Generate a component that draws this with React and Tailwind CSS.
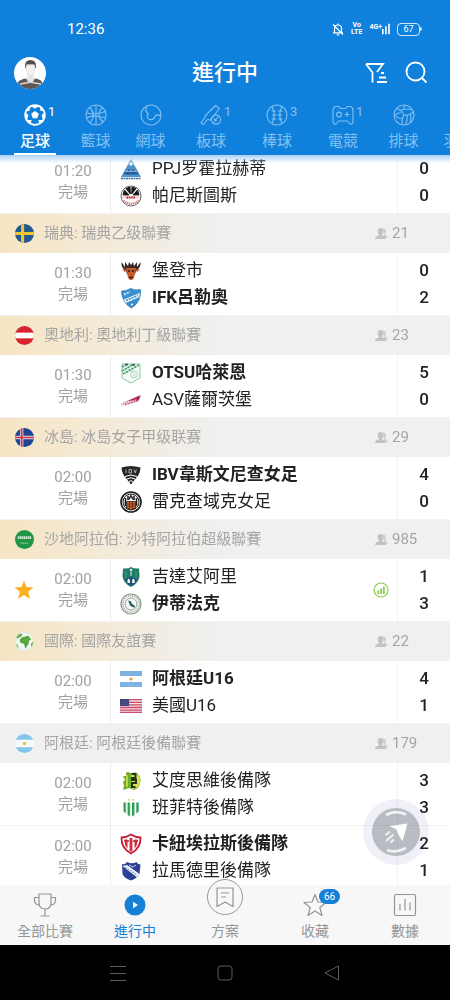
import React from "react";

const crests = {
  ppj: (
    <>
      <path d="M11 1 L21 19 H1 Z" fill="#4f93c8" />
      <path d="M11 1 L14 7 H8 Z" fill="#8dbde0" />
      <circle cx="11" cy="6" r="1.5" fill="#fff" />
      <path d="M6.5 11.5 h9 l3 5 h-15 z" fill="#1d5f9c" />
      <path d="M5.5 14 q1.5 -3 3 0 M9.5 14 q1.5 -3 3 0 M13.5 14 q1.5 -3 3 0" fill="none" stroke="#fff" strokeWidth="1" />
      <path d="M1 20.5 h20" stroke="#3c6d9b" strokeWidth="1.4" strokeDasharray="2 .5" />
    </>
  ),
  burnesz: (
    <>
      <circle cx="11" cy="11" r="10" fill="#fff" stroke="#666" strokeWidth="1" />
      <path d="M3 10 L4.5 5 L9 10Z M6 3.5 L10 2 L10.3 9Z M12 2 L16 3.5 L11.7 9Z M17.5 5 L19 10 L13 10Z" fill="#1b1b1b" stroke="#1b1b1b" strokeWidth="1" />
      <path d="M2 10.8 h18 v3 h-18 z" fill="#f8dcdc" />
      <path d="M6.5 12.5 h9" stroke="#c22" strokeWidth="2" strokeDasharray="1.6 .7" />
      <path d="M3.5 15.5 Q11 22 18.5 15.5" fill="none" stroke="#d4625a" strokeWidth="2" strokeDasharray="1.2 .8" />
    </>
  ),
  moose: (
    <>
      <path d="M1.5 2 L5 7 L5 2 L8 6 L9 2 L11 5 L13 2 L14 6 L17 2 L17 7 L20.5 2 Q21 8 16.5 10 L15 14 H7 L5.5 10 Q1 8 1.5 2Z" fill="#3b2a2a" />
      <path d="M6 8 L16 8 L15.5 12 L13.8 18 Q11 22.5 8.2 18 L6.5 12 Z" fill="#c75a2b" />
      <path d="M2 9 l4 1 -1 2 z M20 9 l-4 1 1 2z" fill="#a8451f" />
      <path d="M8 11 h2 M12 11 h2 M9.3 17.5 h3.4" stroke="#2a1717" strokeWidth="1.3" />
    </>
  ),
  ifk: (
    <>
      <path d="M1.5 4 Q6 4.5 10.5 1.5 Q16 4 20.5 2.5 Q21.5 15 11.5 21 Q2 16 1.5 4Z" fill="#3c8fcf" stroke="#2f7dbd" strokeWidth=".8" />
      <path d="M3.5 12.5 L19.8 6 L19.3 10 L5.8 16 Z" fill="#e8f3fb" />
      <path d="M6 13.5 L18 8.5" stroke="#3c8fcf" strokeWidth="1.6" strokeDasharray="2 1" />
      <path d="M4 7.5 L10 5" stroke="#cfe4f5" strokeWidth="2" strokeDasharray="2 1" />
      <circle cx="12" cy="17.5" r="1" fill="#fff" />
    </>
  ),
  otsu: (
    <>
      <path d="M2 2 H20 V16 L11 21 L2 16 Z" fill="#f6fbf8" stroke="#8fc7a9" strokeWidth="1" />
      <path d="M2 5 L8 2 M2 9 L14 2 M3 12 L19 3" stroke="#56a67b" strokeWidth="2" strokeDasharray="2.4 .8" />
      <circle cx="14" cy="12.5" r="3.5" fill="none" stroke="#9fd0b6" strokeWidth=".9" />
      <path d="M12 10 l4 5 M16 10.5 l-3.5 4" stroke="#b6dbc7" strokeWidth=".8" />
      <path d="M5 2.5 h3 M12 3 h3" stroke="#3d5c4c" strokeWidth="1.4" />
    </>
  ),
  asv: (
    <>
      <path d="M1 14.5 L8 11.5 L19 6.5 L21 6.5 L19 11.5 L10 14 L2 16.5 Z" fill="#d78bab" />
      <path d="M8 12 L20.5 6.5 L18 11.5 Z" fill="#a5174f" />
      <path d="M2 15 L17 10.5" stroke="#fff" strokeWidth="1.4" strokeDasharray="1 1.2" />
      <path d="M5 16 L18 12" stroke="#b64b78" strokeWidth="1" strokeDasharray="2 1" />
    </>
  ),
  ibv: (
    <>
      <path d="M1.5 3.5 Q11 .5 20.5 3.5 Q20 10 16.5 13.5 L11 20.5 L5.5 13.5 Q2 10 1.5 3.5Z" fill="#262626" />
      <path d="M6 5.5 v3.5 M9 5.5 h2.5 v3.5 h-2.5 z M14 5.5 l1.2 3.5 1.2 -3.5" fill="none" stroke="#bbb" strokeWidth=".9" />
      <path d="M5 12.5 Q11 9.5 17 12.5 M7 15 Q11 12.5 15 15 M9 17.5 Q11 16 13 17.5" fill="none" stroke="#fff" strokeWidth="1" />
    </>
  ),
  kr: (
    <>
      <circle cx="11" cy="11" r="10" fill="#fff" stroke="#1c1c1c" strokeWidth="1.6" />
      <circle cx="11" cy="11" r="8" fill="none" stroke="#1c1c1c" strokeWidth="1" />
      <path d="M5.5 15 V7 M8 9 V4.8 M14 9 V4.8 M16.5 15 V7" stroke="#1c1c1c" strokeWidth="1.6" />
      <path d="M9 8.5 L11 4.5 L13 8.5" fill="none" stroke="#1c1c1c" strokeWidth="1.4" />
      <path d="M6.5 10.5 H15.5 V17 Q11 20 6.5 17Z" fill="#d9682a" stroke="#1c1c1c" strokeWidth=".8" />
      <path d="M7 13 h8 M7 15.2 h8 M9.5 11 v7 M12.5 11 v7" stroke="#5a2a10" strokeWidth=".8" />
    </>
  ),
  ahli: (
    <>
      <path d="M3 2.5 Q8 3 11 1 Q14 3 19 2.5 L19.5 10 Q19 17 11 21 Q3 17 2.5 10 Z" fill="#1f7a66" />
      <path d="M5 5 h2 v9 h-2 z M15 5 h2 v9 h-2z" fill="#2c8f78" />
      <path d="M9.5 3.5 q1.5 -1.5 3 0 l-1.5 2 z M10.6 5 h.9 v5 h-.9 z" fill="#f2f7f5" />
      <path d="M5 13 Q11 9.5 17 13 Q16 18 11 20 Q6 18 5 13Z" fill="#264f7b" />
      <path d="M7.5 17 v-3 l1.2 -1.5 1.2 1.5 v3 M12.2 17 v-3 l1.2 -1.5 1.2 1.5 v3" fill="#fff" />
    </>
  ),
  ettifaq: (
    <>
      <circle cx="11" cy="11" r="10" fill="#fff" stroke="#7d9c90" strokeWidth="1.2" />
      <circle cx="11" cy="11" r="8.2" fill="none" stroke="#b7aa98" strokeWidth="1.6" strokeDasharray="1.4 .8" />
      <circle cx="11" cy="11" r="6" fill="#f4f7f6" stroke="#7fa395" strokeWidth="1" />
      <path d="M8 7.5 l3 1 1 2.5 2.5 1.5 .5 2 -2 -.2 -3 -1.8 -1 -3 z" fill="#1d5f53" />
    </>
  ),
  arg: (
    <>
      <rect y="3" width="22" height="16" fill="#fff" />
      <path d="M0 3 h22 v5 H0z M0 14 h22 v5 H0z" fill="#7db3e2" />
      <circle cx="11" cy="11" r="1.6" fill="#d3a05a" />
    </>
  ),
  usa: (
    <>
      <rect y="4" width="22" height="14" fill="#f6dfe4" />
      <path d="M0 4.7 h22 M0 7.3 h22 M0 9.9 h22 M0 12.5 h22 M0 15.1 h22 M0 17.4 h22" stroke="#c8496a" strokeWidth="1.3" />
      <rect y="4" width="9" height="7" fill="#3c3f78" />
      <path d="M1.5 5.8 h7 M1.5 7.6 h7 M1.5 9.4 h7" stroke="#9a9cc4" strokeWidth=".6" strokeDasharray=".7 1" />
    </>
  ),
  aldosivi: (
    <>
      <path d="M6 3 Q8 1 10 3 L16 2.5 Q21 6 20.5 11 Q20 18 14 20 L9 18 L3 20 L4 16 L3 12 L5 10 L3 6 L6 6Z" fill="#6fae2b" />
      <path d="M11 3 Q20 2 20 11 Q20 18 12 19 Z" fill="#dfe04a" />
      <path d="M7 5 L7 17" stroke="#d6e04c" strokeWidth="1.6" />
      <path d="M11.5 4 h4 v4 h-3.5 v2 h4 v3 h-4 v4 h3.5" fill="none" stroke="#20331a" strokeWidth="2" />
    </>
  ),
  banfield: (
    <>
      <path d="M3.5 5.5 h2.4 v11 l-2.4 -2z M7.6 5.5 h2.4 v14 l-2.4 -1.5z M12 5.5 h2.4 v12.5 l-2.4 1.5z M16.3 5.5 h2.4 v9 l-2.4 2z" fill="#2f9e55" />
      <path d="M5.9 6 v10 M10 6 v13 M14.4 6 v11.5" stroke="#9ad0ab" strokeWidth=".7" />
      <circle cx="8.8" cy="2.8" r=".9" fill="#d8c56a" />
      <circle cx="13.2" cy="2.8" r=".9" fill="#d8c56a" />
    </>
  ),
  canuelas: (
    <>
      <path d="M1.5 4.5 Q6.5 4.5 11 1.5 Q15.5 4.5 20.5 4.5 Q21 15 11 20.5 Q1 15 1.5 4.5Z" fill="#fff" stroke="#c32034" strokeWidth="1.8" />
      <path d="M4.5 6.5 h3 v9 l-2.2 -3z M9.6 5 h2.8 v13 l-1.4 .8 -1.4 -.8z M14.5 6.5 h3 l-.8 6 -2.2 3z" fill="#cf2c3e" />
      <path d="M4 8 h5 M13 8 h5" stroke="#c32034" strokeWidth="1.3" />
    </>
  ),
  merlo: (
    <>
      <path d="M2 4 Q5 5 7 2 Q12 4.5 16.5 2 Q17.5 4.5 20.5 4.5 L19.5 14 Q16 19 11 20.5 Q4.5 18.5 2.5 14Z" fill="#2b4193" />
      <path d="M2.5 6 L7 5 L19.5 14 L16.5 17 Z" fill="#f4f5fb" />
      <path d="M5 7 L17 15" stroke="#8f9acb" strokeWidth="1.2" strokeDasharray="2 .9" />
      <path d="M9 5 l4 2 3 -2" fill="none" stroke="#c3c9e6" strokeWidth="1" />
    </>
  ),
};

const Crest = ({ id }) => (
  <svg viewBox="0 0 22 22" className="h-[22px] w-[22px] shrink-0" aria-hidden="true">
    {crests[id]}
  </svg>
);

const flags = {
  sweden: (
    <>
      <rect width="20" height="20" fill="#22588f" />
      <path d="M8 0 v20 M0 10 h20" stroke="#f3c62f" strokeWidth="3.2" />
    </>
  ),
  austria: (
    <>
      <rect width="20" height="20" fill="#d8242f" />
      <rect y="7" width="20" height="6" fill="#fff" />
    </>
  ),
  iceland: (
    <>
      <rect width="20" height="20" fill="#1d4396" />
      <path d="M7 0 v20 M0 10 h20" stroke="#d9dbe9" strokeWidth="3.6" />
      <path d="M7 0 v20 M0 10 h20" stroke="#d5303d" strokeWidth="1.8" />
    </>
  ),
  saudi: (
    <>
      <rect width="20" height="20" fill="#1f9545" />
      <path d="M3 8 h14" stroke="#d3ecd9" strokeWidth="3" strokeDasharray="1.6 .5" />
      <path d="M6 13.8 h8" stroke="#a5d8b4" strokeWidth=".9" />
    </>
  ),
  world: (
    <>
      <rect width="20" height="20" fill="#f3f7f3" />
      <path d="M3 1 L8 2 L6 5 L2 7 L0 5Z M7.5 5.5 L14 4 L17 7.5 L15 9 L14 13 L11 17.5 L9.5 12.5 L5.5 11 L5 8Z M17 12 l2 -2 v4 l-2 2z M1 12 l2 2 1 3 -3 -2z" fill="#58a63f" />
      <circle cx="10" cy="10" r="9.5" fill="none" stroke="#cfe3cb" strokeWidth="1" />
    </>
  ),
  argentina: (
    <>
      <rect width="20" height="20" fill="#f5fafd" />
      <path d="M0 0 h20 v6 H0z M0 14 h20 v6 H0z" fill="#83c6ec" />
      <circle cx="10" cy="10" r="1.8" fill="#eabf3b" />
    </>
  ),
};

const leagues = [
  {
    flag: null,
    matches: [{ time: "01:20", home: ["ppj", "PPJ罗霍拉赫蒂", 0], away: ["burnesz", "帕尼斯圖斯", 0] }],
  },
  {
    flag: "sweden", name: "瑞典: 瑞典乙级聯賽", users: 21, warm: true,
    matches: [{ time: "01:30", home: ["moose", "堡登市", 0], away: ["ifk", "IFK呂勒奧", 2] }],
  },
  {
    flag: "austria", name: "奧地利: 奧地利丁級聯賽", users: 23, warm: true,
    matches: [{ time: "01:30", home: ["otsu", "OTSU哈萊恩", 5], away: ["asv", "ASV薩爾茨堡", 0] }],
  },
  {
    flag: "iceland", name: "冰島: 冰島女子甲级联赛", users: 29, warm: true,
    matches: [{ time: "02:00", home: ["ibv", "IBV韋斯文尼查女足", 4], away: ["kr", "雷克查域克女足", 0] }],
  },
  {
    flag: "saudi", name: "沙地阿拉伯: 沙特阿拉伯超級聯賽", users: 985, warm: true,
    matches: [{ time: "02:00", starred: true, stats: true, home: ["ahli", "吉達艾阿里", 1], away: ["ettifaq", "伊蒂法克", 3] }],
  },
  {
    flag: "world", name: "國際: 國際友誼賽", users: 22, warm: true,
    matches: [{ time: "02:00", home: ["arg", "阿根廷U16", 4], away: ["usa", "美國U16", 1] }],
  },
  {
    flag: "argentina", name: "阿根廷: 阿根廷後備聯賽", users: 179, warm: false,
    matches: [
      { time: "02:00", home: ["aldosivi", "艾度思維後備隊", 3], away: ["banfield", "班菲特後備隊", 3] },
      { time: "02:00", home: ["canuelas", "卡紐埃拉斯後備隊", 2], away: ["merlo", "拉馬德里後備隊", 1] },
    ],
  },
];

const sports = [
  {
    name: "足球", count: 1,
    icon: (
      <>
        <circle cx="11" cy="11" r="9.8" strokeWidth="1.8" />
        <path d="M11 7 L14.8 9.8 L13.3 14.2 H8.7 L7.2 9.8Z" fill="currentColor" stroke="none" />
        <path d="M7.5 1.8 L11 4 L14.5 1.8Z M1.4 9 L3.8 11.5 L2.6 15Z M20.6 9 L18.2 11.5 L19.4 15Z M6 19.3 L7 16.5 L3.8 16.5Z M16 19.3 L15 16.5 L18.2 16.5Z M2.8 6.5 L5 6.5 L5.5 3.5Z M19.2 6.5 L17 6.5 L16.5 3.5Z" fill="currentColor" />
      </>
    ),
  },
  {
    name: "籃球",
    icon: (
      <>
        <circle cx="11" cy="11" r="10" />
        <path d="M11 1 V21 M1.5 9 Q11 11 20.5 7.5 M4.5 3.5 Q12 10 5 19 M17.5 3.5 Q10 11 18 18 M1.5 14 Q6 11.5 11 12 T20.5 14" />
      </>
    ),
  },
  {
    name: "網球",
    icon: (
      <>
        <circle cx="11" cy="11" r="10" />
        <path d="M7 2 Q4 7 8.5 10 Q5.5 13 9.5 15.5 Q14 16.5 15.5 11.5 Q18 10 20.5 12" />
      </>
    ),
  },
  {
    name: "板球", count: 1,
    icon: (
      <>
        <path d="M15.5 1.5 L19.5 4.5 L10.5 16 L7.5 15.5 L3.5 20.5 L1 19 L4.5 14 L5.5 11.5 Z" />
        <circle cx="16" cy="15.5" r="4.6" />
        <path d="M13.5 18.5 L18.5 12.5 M14 14.5 l2.5 2.5" />
      </>
    ),
  },
  {
    name: "棒球", count: 3,
    icon: (
      <>
        <circle cx="11" cy="11" r="10" />
        <path d="M6 2.5 Q10.5 11 6 19.5 M16 2.5 Q11.5 11 16 19.5 M5.5 7 h4.5 M6 11 h4.5 M5.5 15 h4.5 M12 7 h4.5 M11.5 11 h4.5 M12 15 h4.5" />
      </>
    ),
  },
  {
    name: "電競", count: 1,
    icon: (
      <>
        <path d="M3.5 2.5 H7 L8.5 4.5 H13.5 L15 2.5 H18.5 Q21 3.5 21 6.5 V18 Q20.5 20.5 18 20 L15.5 17 H6.5 L4 20 Q1.5 20.5 1 18 V6.5 Q1 3.5 3.5 2.5Z" />
        <circle cx="7" cy="10.5" r="2.4" />
        <path d="M15 8 v5 M12.5 10.5 h5" />
      </>
    ),
  },
  {
    name: "排球",
    icon: (
      <>
        <circle cx="11" cy="11" r="10" />
        <path d="M11 11 Q9 6 3.5 4.5 M11 11 Q16 12 20.5 8 M11 11 Q8 15 9.5 20.8 M8 9 Q3 8.5 1.5 13 M7 6.5 Q12 4 19 5.5 M14 11.5 Q15 16 12.5 20.5 M17.5 11 Q18.5 14 17.5 18 M8.5 14.5 Q5 15 3 12 M10 4.5 L12.5 1.2" />
      </>
    ),
  },
  { name: "羽毛球", wide: true, icon: <path d="M4 18 Q1 15 4 12 L14 3 L19 8 L10 18 Q7 21 4 18Z M7 10 L12 15 M9 13 L16 5" /> },
];

const tabWidth = (s) => (s.wide ? "w-[70px]" : s.count ? "w-[66px]" : "w-[55px]");

const StatusBar = () => (
  <div className="flex h-[52px] items-center justify-between pt-1.5 pr-7 pl-[67px] text-white">
    <span className="text-[15px] leading-5">12:36</span>
    <div className="flex items-center gap-[7px]">
      <svg viewBox="0 0 12 14" className="h-3.5 w-3" fill="none" stroke="currentColor" strokeWidth="1.2" aria-hidden="true">
        <path d="M2.5 10.5 V6.5 Q2.5 3 6 3 Q9.5 3 9.5 6.5 V10.5 M1 10.8 H11 M6 1.5 V3 M4.8 12.8 h2.4 M1 2.5 L11 12.5" />
      </svg>
      <span className="flex flex-col text-center text-[7px] leading-[7px] font-bold">
        <span>Vo</span>
        <span>LTE</span>
      </span>
      <div className="flex items-end">
        <span className="mb-1 text-[7px] leading-[10px] font-bold">4G+</span>
        <svg viewBox="0 0 9 14" className="h-3.5 w-2" fill="currentColor" aria-hidden="true">
          <path d="M0 7 h1.8 v6 h-1.8z M3.5 4 h1.8 v9 h-1.8z M7 1 h1.8 v12 h-1.8z" />
        </svg>
      </div>
      <div className="flex items-center">
        <span className="flex h-[13px] w-[23px] items-center justify-center rounded border border-white/80 text-[9px] leading-[9px]">67</span>
        <span className="h-1 w-0.5 rounded-r bg-white/80" />
      </div>
    </div>
  </div>
);

const Avatar = () => (
  <svg viewBox="0 0 32 32" className="h-8 w-8 rounded-full" aria-hidden="true">
    <rect width="32" height="32" fill="#fff" />
    <path d="M11 9 Q11 3 16.5 3 Q22 3 22 9 L21.5 12 L20 7.5 H13 L11.5 12Z" fill="#544e4e" />
    <path d="M12.5 8 H20.5 V14 Q20 18.5 16.5 19 Q13 18.5 12.5 14Z" fill="#f3f1f0" stroke="#d8d5d4" strokeWidth=".6" />
    <path d="M13.5 18 V22 L16.5 25 L19.5 22 V18" fill="#e5e3e3" />
    <path d="M4 25 Q6 22.5 12 21.5 L16.5 26 L21 21.5 Q27 22.5 28 25 V32 H4Z" fill="#5d5959" />
    <path d="M12.5 21 L15 25.5 L6 27 M20.5 21 L18 25.5 L27 27" fill="none" stroke="#d9d7d7" strokeWidth="1.4" />
  </svg>
);

const Header = () => (
  <header className="relative z-10 shrink-0 bg-[#0f80dc]">
    <StatusBar />
    <div className="grid h-[42px] grid-cols-3 items-center px-3.5">
      <button type="button" aria-label="個人資料" className="w-8"><Avatar /></button>
      <h1 className="text-center text-[22px] leading-7 font-medium text-white">進行中</h1>
      <div className="flex justify-end gap-4 pr-2 text-white">
        <button type="button" aria-label="篩選">
          <svg viewBox="0 0 24 24" className="h-6 w-6" fill="none" stroke="currentColor" strokeWidth="1.8" aria-hidden="true">
            <path d="M2 3 H19 L13 11 M2 3 L8.5 11.5 V21.5 M17 12 H20 M15 16.5 H22 M13 21 H23" />
          </svg>
        </button>
        <button type="button" aria-label="搜尋">
          <svg viewBox="0 0 24 24" className="h-6 w-6" fill="none" stroke="currentColor" strokeWidth="1.8" aria-hidden="true">
            <circle cx="11.5" cy="10.5" r="9" />
            <path d="M18 17 L22.5 21.5" />
          </svg>
        </button>
      </div>
    </div>
    <nav className="flex overflow-hidden pl-0.5">
      {sports.map((s, i) => (
        <button
          key={s.name}
          type="button"
          className={`relative flex h-[61px] shrink-0 flex-col items-center pt-2.5 ${tabWidth(s)} ${i === 0 ? "text-white" : "text-[#85c0f1]"}`}
        >
          <span className="relative">
            <svg viewBox="0 0 22 22" className="h-[22px] w-[22px]" fill="none" stroke="currentColor" strokeWidth="1.1" strokeLinejoin="round" aria-hidden="true">
              {s.icon}
            </svg>
            {s.count && <span className="absolute top-0 left-full ml-0.5 text-[13px] leading-4">{s.count}</span>}
          </span>
          <span className={`mt-1 text-[15px] leading-[22px] ${i === 0 ? "font-medium" : ""}`}>{s.name}</span>
          {i === 0 && <span className="absolute bottom-0 h-0.5 w-[42px] bg-white" />}
        </button>
      ))}
    </nav>
    <div className="absolute inset-x-0 top-full h-2 bg-linear-to-b from-[#a9d1f4] to-transparent" />
  </header>
);

const LeagueBar = ({ league }) => (
  <div className={`flex h-[39px] items-center pl-[15px] text-[15px] text-[#a5a5a5] ${league.warm ? "bg-linear-to-r from-[#f6e5c3] to-[#f0f0f0] to-50%" : "bg-[#f0f0f0]"}`}>
    <svg viewBox="0 0 20 20" className="h-[19px] w-[19px] shrink-0 rounded-full" aria-hidden="true">
      {flags[league.flag]}
    </svg>
    <h2 className="ml-2.5 flex-1 truncate">{league.name}</h2>
    <div className="flex w-[75px] items-center gap-1">
      <svg viewBox="0 0 13 13" className="h-[13px] w-[13px]" fill="#c2c2c2" aria-hidden="true">
        <path d="M8 1.5 Q11 1.5 11 4.5 Q11 6.5 9.8 7.6 Q12.5 8.5 12.8 11 H9 Z" opacity=".7" />
        <path d="M5.5 1 Q8.3 1 8.3 4.2 Q8.3 6.6 7 7.6 V8.4 Q11 9 11 12 H0 Q0 9 4 8.4 V7.6 Q2.7 6.6 2.7 4.2 Q2.7 1 5.5 1Z" />
      </svg>
      <span>{league.users}</span>
    </div>
  </div>
);

const Team = ({ team, winner }) => (
  <div className="flex h-[27px] items-center gap-2.5">
    <Crest id={team[0]} />
    <span className={`truncate text-[17px] text-[#222] ${winner ? "font-bold" : ""}`}>{team[1]}</span>
  </div>
);

const MatchRow = ({ match }) => {
  const { home, away } = match;
  return (
    <div className="flex h-[63px] border-b border-[#f3f3f3] bg-white">
      <div className="flex w-9 items-center pl-3.5">
        {match.starred && (
          <svg viewBox="0 0 20 20" className="h-5 w-5" fill="#fbb01f" aria-hidden="true">
            <path d="M10 .5 L12.5 7 L19.5 7.4 L14.1 11.8 L16 18.8 L10 14.9 L4 18.8 L5.9 11.8 L.5 7.4 L7.5 7Z" />
          </svg>
        )}
      </div>
      <div className="flex w-[75px] flex-col justify-center border-r border-[#ececec] text-center text-[15px] leading-[21px] text-[#a0a0a0]">
        <span>{match.time}</span>
        <span>完場</span>
      </div>
      <div className="flex min-w-0 flex-1 flex-col justify-center pl-[9px]">
        <Team team={home} winner={home[2] > away[2]} />
        <Team team={away} winner={away[2] > home[2]} />
      </div>
      {match.stats && (
        <div className="flex items-center pr-2">
          <svg viewBox="0 0 16 16" className="h-4 w-4" fill="none" stroke="#8cc84b" aria-hidden="true">
            <circle cx="8" cy="8" r="7" strokeWidth="1.2" />
            <path d="M5.2 8.5 V12 M8 6.5 V12 M10.8 4.5 V12" strokeWidth="1.8" />
          </svg>
        </div>
      )}
      <div className="flex w-[53px] flex-col justify-center border-l border-[#f3f3f3] text-center text-[17px] leading-[27px] font-medium text-[#222]">
        <span>{home[2]}</span>
        <span>{away[2]}</span>
      </div>
    </div>
  );
};

const tabs = [
  { name: "全部比賽", icon: <path d="M6 1 H18 V9.5 Q18 16 12 16 Q6 16 6 9.5Z M6 4.5 H1.5 V7.5 Q2 12 6.5 12 M18 4.5 H22.5 V7.5 Q22 12 17.5 12 M12 16 V23 M7.5 23 H16.5" /> },
  {
    name: "進行中", active: true,
    icon: (
      <>
        <circle cx="12" cy="12" r="10.5" fill="#1680d6" stroke="none" />
        <path d="M10 8.7 L15 12 L10 15.3Z" fill="#fff" stroke="none" />
      </>
    ),
  },
  { name: "方案", raised: true, icon: <path d="M4 3 H20 V21.5 L12 17 L4 21.5Z M8 8 H16 M8 12 H13" /> },
  { name: "收藏", badge: 66, icon: <path d="M12 1.5 L15 9 L23 9.5 L16.8 14.5 L19 22.5 L12 18 L5 22.5 L7.2 14.5 L1 9.5 L9 9Z" /> },
  { name: "數據", icon: <path d="M3 1.5 H21 Q22.5 1.5 22.5 3 V21 Q22.5 22.5 21 22.5 H3 Q1.5 22.5 1.5 21 V3 Q1.5 1.5 3 1.5Z M7 11 V17.5 M12 6 V17.5 M17 9.5 V17.5" /> },
];

const BottomNav = () => (
  <nav className="relative z-10 grid h-[60px] shrink-0 grid-cols-5 grid-rows-1 bg-[#f7f7f7]">
    {tabs.map((t) => (
      <button
        key={t.name}
        type="button"
        className={`flex flex-col items-center justify-end gap-0.5 pb-1 text-[14px] leading-5 ${t.active ? "text-[#1680d6]" : "text-[#959595]"}`}
      >
        <span className={t.raised ? "mb-1 flex h-9 w-9 shrink-0 items-center justify-center rounded-full border border-[#999] bg-[#f7f7f7]" : "relative mb-0.5"}>
          <svg viewBox="0 0 24 24" className="h-6 w-6" fill="none" stroke="currentColor" strokeWidth="1.2" strokeLinejoin="round" aria-hidden="true">
            {t.icon}
          </svg>
          {t.badge && (
            <span className="absolute -top-1 left-4 rounded-full bg-[#1680d6] px-[5px] text-[10px] leading-[15px] text-white">{t.badge}</span>
          )}
        </span>
        <span>{t.name}</span>
      </button>
    ))}
  </nav>
);

const SystemNav = () => (
  <div className="flex h-[55px] shrink-0 items-center justify-center gap-[91px] bg-black text-[#5c5c5c]">
    <button type="button" aria-label="選單">
      <svg viewBox="0 0 16 16" className="h-4 w-4" fill="none" stroke="currentColor" aria-hidden="true">
        <path d="M0 1.5 H16 M0 8.5 H16 M0 15.5 H16" />
      </svg>
    </button>
    <button type="button" aria-label="主畫面">
      <svg viewBox="0 0 16 16" className="h-4 w-4" fill="none" stroke="currentColor" aria-hidden="true">
        <rect x="1" y="1" width="14" height="14" rx="3" />
      </svg>
    </button>
    <button type="button" aria-label="返回">
      <svg viewBox="0 0 16 16" className="h-4 w-4" fill="none" stroke="currentColor" strokeLinejoin="round" aria-hidden="true">
        <path d="M14.5 1 V15 L1 8Z" />
      </svg>
    </button>
  </div>
);

const App = () => (
  <div className="flex h-screen flex-col bg-white font-['Roboto','Noto_Sans_CJK_TC',sans-serif]">
    <Header />
    <main className="relative min-h-0 flex-1 overflow-hidden">
      <div className="-mt-1">
        {leagues.map((league) => (
          <section key={league.name || "top"}>
            {league.flag && <LeagueBar league={league} />}
            {league.matches.map((m) => <MatchRow key={m.home[0]} match={m} />)}
          </section>
        ))}
      </div>
      <button type="button" aria-label="快速捲動" className="absolute right-[21px] bottom-5 flex h-[66px] w-[66px] items-center justify-center rounded-full bg-[#f0f0f8] mix-blend-multiply">
        <svg viewBox="0 0 48 48" className="h-12 w-12" aria-hidden="true">
          <circle cx="24" cy="24" r="24" fill="#babcc3" />
          <path d="M17.5 18 L35.5 15.5 L30.5 33 L27.5 28.5 L26 26 L24.5 21.5 Z" fill="#fff" />
          <path d="M14 7 Q24 1.5 34 6.5 M15 42 Q24 45.5 34 40" fill="none" stroke="#f2f2f5" strokeWidth="2.6" />
          <path d="M13.5 27 L18 23.5 M14 33 L21.5 26.5 M18.5 34.5 L22 31.5" fill="none" stroke="#f2f2f5" strokeWidth="2" />
        </svg>
      </button>
    </main>
    <BottomNav />
    <SystemNav />
  </div>
);

export default App;
